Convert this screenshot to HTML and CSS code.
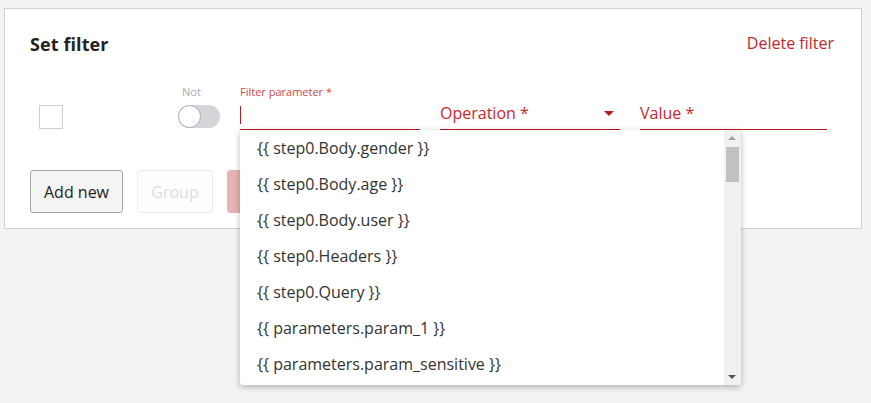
FILE: index.html
```html
<!DOCTYPE html>
<html lang="en">
<head>
<meta charset="utf-8">
<title>Set filter</title>
<link rel="stylesheet" href="styles.css">
</head>
<body>
<div class="card">
  <div class="header">
    <h2 class="title">Set filter</h2>
    <a class="delete">Delete filter</a>
  </div>
  <div class="filter-row">
    <div class="cell-check"><span class="checkbox"></span></div>
    <div class="cell-not">
      <span class="small-label not-label">Not</span>
      <span class="toggle"><span class="knob"></span></span>
    </div>
    <div class="field field-param">
      <span class="small-label red-label">Filter parameter *</span>
      <div class="input"><span class="caret"></span></div>
      <div class="dropdown">
        <ul class="options">
          <li>{{ step0.Body.gender }}</li>
          <li>{{ step0.Body.age }}</li>
          <li>{{ step0.Body.user }}</li>
          <li>{{ step0.Headers }}</li>
          <li>{{ step0.Query }}</li>
          <li>{{ parameters.param_1 }}</li>
          <li>{{ parameters.param_sensitive }}</li>
        </ul>
        <div class="scrollbar">
          <span class="arrow up"></span>
          <span class="thumb"></span>
          <span class="arrow down"></span>
        </div>
      </div>
    </div>
    <div class="field field-op">
      <div class="input"><span class="placeholder">Operation *</span><span class="select-arrow"></span></div>
    </div>
    <div class="field field-value">
      <div class="input"><span class="placeholder">Value *</span></div>
    </div>
  </div>
  <div class="actions">
    <button class="btn btn-default">Add new</button>
    <button class="btn btn-disabled">Group</button>
    <button class="btn btn-danger">Delete</button>
  </div>
</div>
</body>
</html>
```
FILE: styles.css
```css
* { box-sizing: border-box; }
html, body { margin: 0; padding: 0; }
body {
  background: #f3f3f3;
  font-family: "Open Sans", "Liberation Sans", sans-serif;
  color: #333;
  padding: 8px 9px 0 4px;
  width: 871px;
  height: 403px;
  overflow: hidden;
}
.card {
  width: 858px;
  background: #fff;
  border: 1px solid #d3d3d3;
  padding: 23px 27px 15px 25px;
}
.header {
  display: flex;
  justify-content: space-between;
  align-items: center;
  height: 24px;
}
.title {
  margin: 0;
  font-size: 18px;
  font-weight: 700;
  color: #222;
  line-height: 24px;
  letter-spacing: 0.1px;
}
.delete {
  color: #c0282d;
  font-size: 16px;
  line-height: 24px;
  margin-top: -2px;
}
.filter-row {
  display: flex;
  align-items: flex-start;
  margin-top: 29px;
  height: 45px;
}
.cell-check {
  width: 148px;
  padding-top: 20px;
  padding-left: 9px;
}
.checkbox {
  display: block;
  width: 24px;
  height: 24px;
  border: 1px solid #cfcfcf;
  background: #fff;
}
.cell-not {
  width: 62px;
  display: flex;
  flex-direction: column;
  align-items: flex-start;
}
.small-label {
  display: block;
  font-size: 11px;
  line-height: 14px;
  height: 14px;
}
.not-label {
  color: #a8a8a8;
  margin-left: 4px;
}
.toggle {
  display: block;
  margin-top: 6px;
  width: 42px;
  height: 23px;
  border-radius: 12px;
  background: #d3d5d9;
  position: relative;
}
.knob {
  position: absolute;
  left: 0;
  top: 0;
  width: 23px;
  height: 23px;
  border-radius: 50%;
  background: #fff;
  border: 1px solid #a9abaf;
}
.field { position: relative; }
.field-param { width: 180px; margin-right: 20px; }
.field-op { width: 180px; margin-right: 20px; margin-top: 14px; }
.field-value { width: 187px; margin-top: 14px; }
.red-label { color: #d0474a; }
.input {
  height: 25px;
  margin-top: 6px;
  border-bottom: 1px solid #b71c1c;
  position: relative;
  display: flex;
  align-items: center;
}
.caret {
  display: block;
  width: 1px;
  height: 18px;
  background: #b71c1c;
  margin-top: -5px;
}
.placeholder {
  color: #c62828;
  font-size: 16px;
  line-height: 20px;
  margin-top: -8px;
}
.select-arrow {
  position: absolute;
  right: 6px;
  top: 6px;
  width: 0;
  height: 0;
  border-left: 5px solid transparent;
  border-right: 5px solid transparent;
  border-top: 5px solid #b71c1c;
}
.dropdown {
  position: absolute;
  left: 0;
  top: 45px;
  width: 501px;
  height: 255px;
  background: #fff;
  box-shadow: 0 2px 6px rgba(0,0,0,0.28);
  border-radius: 0 0 3px 3px;
  z-index: 10;
  display: flex;
  overflow: hidden;
}
.options {
  list-style: none;
  margin: 0;
  padding: 0;
  flex: 1;
}
.options li {
  height: 36px;
  line-height: 36px;
  padding-left: 17px;
  font-size: 16px;
  color: #333;
  white-space: nowrap;
}
.scrollbar {
  width: 17px;
  background: #f1f1f1;
  position: relative;
}
.thumb {
  position: absolute;
  left: 2px;
  top: 17px;
  width: 13px;
  height: 35px;
  background: #c1c1c1;
}
.arrow {
  position: absolute;
  left: 4px;
  width: 0;
  height: 0;
  border-left: 4px solid transparent;
  border-right: 4px solid transparent;
}
.arrow.up { top: 6px; border-bottom: 4px solid #a3a3a3; }
.arrow.down { bottom: 6px; border-top: 4px solid #505050; }
.actions {
  display: flex;
  gap: 14px;
  margin-top: 40px;
}
.btn {
  height: 43px;
  border-radius: 3px;
  font-family: "Open Sans", "Liberation Sans", sans-serif;
  font-size: 16px;
  padding: 0 12px;
}
.btn-default {
  width: 93px;
  background: #f4f4f4;
  border: 1px solid #a5a5a5;
  color: #222;
}
.btn-disabled {
  width: 76px;
  background: #fdfdfd;
  border: 1px solid #ececec;
  color: #dedede;
}
.btn-danger {
  width: 90px;
  background: #e6b4b4;
  border: 1px solid #e6b4b4;
  color: #fff;
}
```
